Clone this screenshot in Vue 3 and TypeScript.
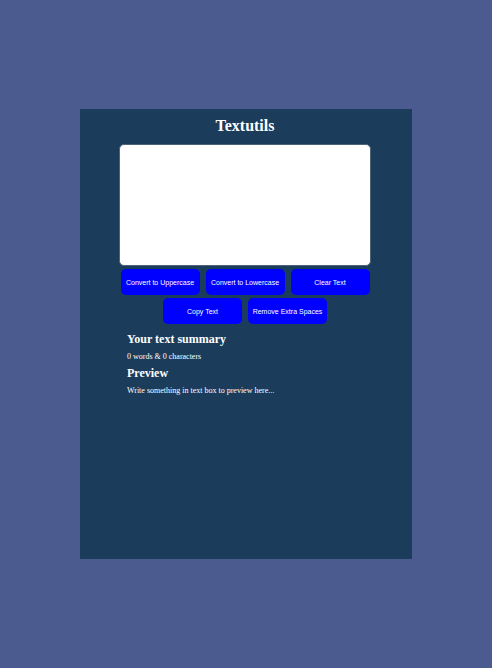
<script setup lang="ts">
import { computed, ref } from 'vue'

const text = ref('')

const wordCount = computed(() => text.value.split(/\s+/).filter(Boolean).length)
const preview = computed(() => text.value || 'Write something in text box to preview here...')

function toUpper(): void {
  text.value = text.value.toUpperCase()
}
function toLower(): void {
  text.value = text.value.toLowerCase()
}
function clearText(): void {
  text.value = ''
}
function copyText(): void {
  navigator.clipboard?.writeText(text.value)
}
function removeSpaces(): void {
  text.value = text.value.split(/\s+/).filter(Boolean).join(' ')
}

const actions = [
  { label: 'Convert to Uppercase', run: toUpper },
  { label: 'Convert to Lowercase', run: toLower },
  { label: 'Clear Text', run: clearText },
  { label: 'Copy Text', run: copyText },
  { label: 'Remove Extra Spaces', run: removeSpaces },
]
</script>

<template>
  <div class="page">
    <main class="panel">
      <h1 id="title" class="title">Textutils</h1>
      <textarea v-model="text" class="editor" aria-labelledby="title"></textarea>
      <div class="actions">
        <button v-for="action in actions" :key="action.label" type="button" class="action" @click="action.run">
          {{ action.label }}
        </button>
      </div>
      <section class="summary">
        <h2 class="heading">Your text summary</h2>
        <p class="line">{{ wordCount }} words &amp; {{ text.length }} characters</p>
        <h2 class="heading">Preview</h2>
        <p class="line">{{ preview }}</p>
      </section>
    </main>
  </div>
</template>

<style>
body {
  background: #4b5b8f;
}
</style>

<style scoped>
.page {
  min-height: 100vh;
  box-sizing: border-box;
  padding: 109px 80px;
  display: flex;
  background: #4b5b8f;
  font-family: "Liberation Serif", "Times New Roman", serif;
  color: #fff;
}
.panel {
  flex: 1;
  min-width: 0;
  box-sizing: border-box;
  padding: 8px 41px 8px 39px;
  background: #1c3c5c;
}
.title {
  margin: 0 0 9px;
  font-size: 16px;
  line-height: 18px;
  text-align: center;
}
.editor {
  display: block;
  box-sizing: border-box;
  width: 100%;
  height: 122px;
  padding: 8px;
  border: 1px solid #4e6379;
  border-radius: 5px;
  background: #fff;
  resize: none;
  outline: none;
  font: 8px "Liberation Sans", Arial, sans-serif;
}
.actions {
  display: flex;
  flex-wrap: wrap;
  justify-content: center;
  gap: 3px 6px;
  margin-top: 3px;
}
.action {
  width: 79px;
  height: 26px;
  padding: 0;
  border: 0;
  border-radius: 5px;
  background: #0000ff;
  color: #fff;
  font: 7px "Liberation Sans", Arial, sans-serif;
  white-space: nowrap;
  cursor: pointer;
}
.summary {
  margin-top: 8px;
  padding: 0 8px;
}
.heading {
  margin: 0;
  font-size: 12px;
  line-height: 14px;
}
.line {
  margin: 5px 0 4px;
  font-size: 8px;
  line-height: 11px;
}
</style>
